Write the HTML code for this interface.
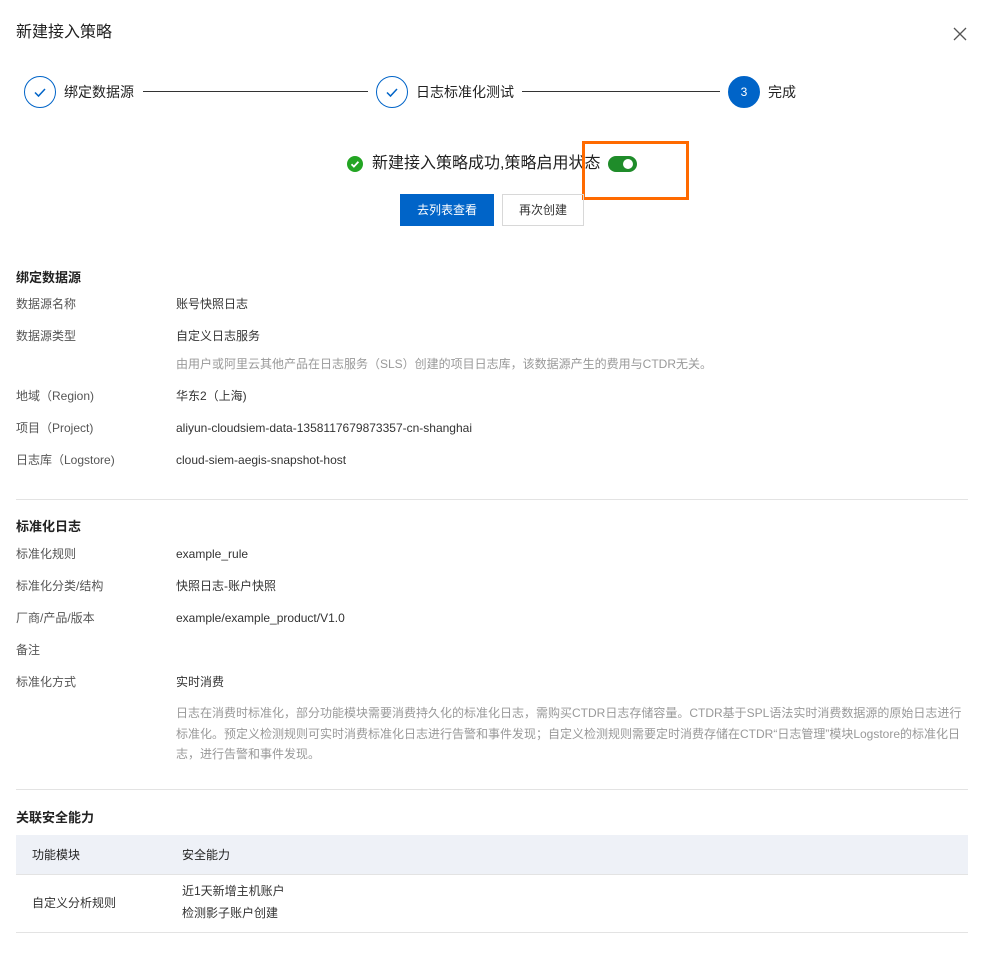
<!DOCTYPE html>
<html><head><meta charset="utf-8"><style>
*{margin:0;padding:0;box-sizing:border-box}
body{width:991px;height:958px;background:#fff;font-family:"Liberation Sans","Noto Sans CJK SC",sans-serif;color:#333;position:relative;overflow:hidden;font-size:12px}
.a{position:absolute;white-space:nowrap;line-height:1}
.c{position:absolute;width:32px;height:32px;border-radius:50%;border:1px solid #0064c8;top:76px}
.l{position:absolute;height:1px;background:#333;top:91px}
.lab{color:#555}
.hr{position:absolute;left:16px;width:952px;height:1px;background:#e3e3e3}
</style></head><body>
<div class="a" style="left:16px;top:25px;font-size:16px;color:#222">新建接入策略</div>
<svg class="a" style="left:953px;top:27px" width="14" height="14"><path d="M1 1L13 13M13 1L1 13" stroke="#555" stroke-width="1.3"/></svg>

<div class="c" style="left:24px"><svg width="30" height="30"><path d="M10 15.5l3.5 3.5 6.5-7" fill="none" stroke="#0064c8" stroke-width="1.5"/></svg></div>
<div class="a" style="left:64px;top:85px;font-size:14px;color:#222">绑定数据源</div>
<div class="l" style="left:143px;width:225px"></div>
<div class="c" style="left:376px"><svg width="30" height="30"><path d="M10 15.5l3.5 3.5 6.5-7" fill="none" stroke="#0064c8" stroke-width="1.5"/></svg></div>
<div class="a" style="left:416px;top:85px;font-size:14px;color:#222">日志标准化测试</div>
<div class="l" style="left:522px;width:198px"></div>
<div class="c" style="left:728px;background:#0064c8;color:#fff;text-align:center;line-height:30px;font-size:12px">3</div>
<div class="a" style="left:768px;top:85px;font-size:14px;color:#222">完成</div>

<svg class="a" style="left:347px;top:156px" width="16" height="16"><circle cx="8" cy="8" r="8" fill="#23a523"/><path d="M4.5 8.2l2.4 2.4 4.5-4.8" fill="none" stroke="#fff" stroke-width="1.8"/></svg>
<div class="a" style="left:372px;top:156px;font-size:16px;color:#222">新建接入策略成功,策略启用状态</div>
<div class="a" style="left:608px;top:156px;width:29px;height:16px;border-radius:8px;background:#1f8c2a"><div style="position:absolute;left:15px;top:3px;width:10px;height:10px;border-radius:50%;background:#fff"></div></div>
<div class="a" style="left:582px;top:141px;width:107px;height:59px;border:3px solid #ff6a00"></div>

<div class="a" style="left:400px;top:194px;width:94px;height:32px;background:#0064c8;color:#fff;text-align:center;line-height:32px;font-size:12px">去列表查看</div>
<div class="a" style="left:502px;top:194px;width:82px;height:32px;border:1px solid #d8d8d8;color:#333;text-align:center;line-height:30px;font-size:12px">再次创建</div>

<div class="a" style="left:16px;top:271px;font-size:13px;font-weight:bold;color:#222">绑定数据源</div>
<div class="a lab" style="left:16px;top:298px">数据源名称</div><div class="a" style="left:176px;top:298px">账号快照日志</div>
<div class="a lab" style="left:16px;top:330px">数据源类型</div><div class="a" style="left:176px;top:330px">自定义日志服务</div>
<div class="a" style="left:176px;top:358px;color:#999">由用户或阿里云其他产品在日志服务（SLS）创建的项目日志库，该数据源产生的费用与CTDR无关。</div>
<div class="a lab" style="left:16px;top:390px">地域（Region)</div><div class="a" style="left:176px;top:390px">华东2（上海)</div>
<div class="a lab" style="left:16px;top:422px">项目（Project)</div><div class="a" style="left:176px;top:422px">aliyun-cloudsiem-data-1358117679873357-cn-shanghai</div>
<div class="a lab" style="left:16px;top:454px">日志库（Logstore)</div><div class="a" style="left:176px;top:454px">cloud-siem-aegis-snapshot-host</div>
<div class="hr" style="top:499px"></div>

<div class="a" style="left:16px;top:520px;font-size:13px;font-weight:bold;color:#222">标准化日志</div>
<div class="a lab" style="left:16px;top:548px">标准化规则</div><div class="a" style="left:176px;top:548px">example_rule</div>
<div class="a lab" style="left:16px;top:580px">标准化分类/结构</div><div class="a" style="left:176px;top:580px">快照日志-账户快照</div>
<div class="a lab" style="left:16px;top:612px">厂商/产品/版本</div><div class="a" style="left:176px;top:612px">example/example_product/V1.0</div>
<div class="a lab" style="left:16px;top:644px">备注</div>
<div class="a lab" style="left:16px;top:676px">标准化方式</div><div class="a" style="left:176px;top:676px">实时消费</div>
<div style="position:absolute;left:176px;top:703px;width:792px;color:#999;line-height:20.5px;font-size:12px">日志在消费时标准化，部分功能模块需要消费持久化的标准化日志，需购买CTDR日志存储容量。CTDR基于SPL语法实时消费数据源的原始日志进行标准化。预定义检测规则可实时消费标准化日志进行告警和事件发现；自定义检测规则需要定时消费存储在CTDR“日志管理”模块Logstore的标准化日志，进行告警和事件发现。</div>
<div class="hr" style="top:789px"></div>

<div class="a" style="left:16px;top:811px;font-size:13px;font-weight:bold;color:#222">关联安全能力</div>
<div class="a" style="left:16px;top:835px;width:952px;height:40px;background:#eef1f7;border-bottom:1px solid #e3e3e3"></div>
<div class="a" style="left:32px;top:849px;color:#222">功能模块</div>
<div class="a" style="left:182px;top:849px;color:#222">安全能力</div>
<div class="a" style="left:32px;top:897px">自定义分析规则</div>
<div class="a" style="left:182px;top:885px">近1天新增主机账户</div>
<div class="a" style="left:182px;top:907px">检测影子账户创建</div>
<div class="hr" style="top:932px"></div>
</body></html>
